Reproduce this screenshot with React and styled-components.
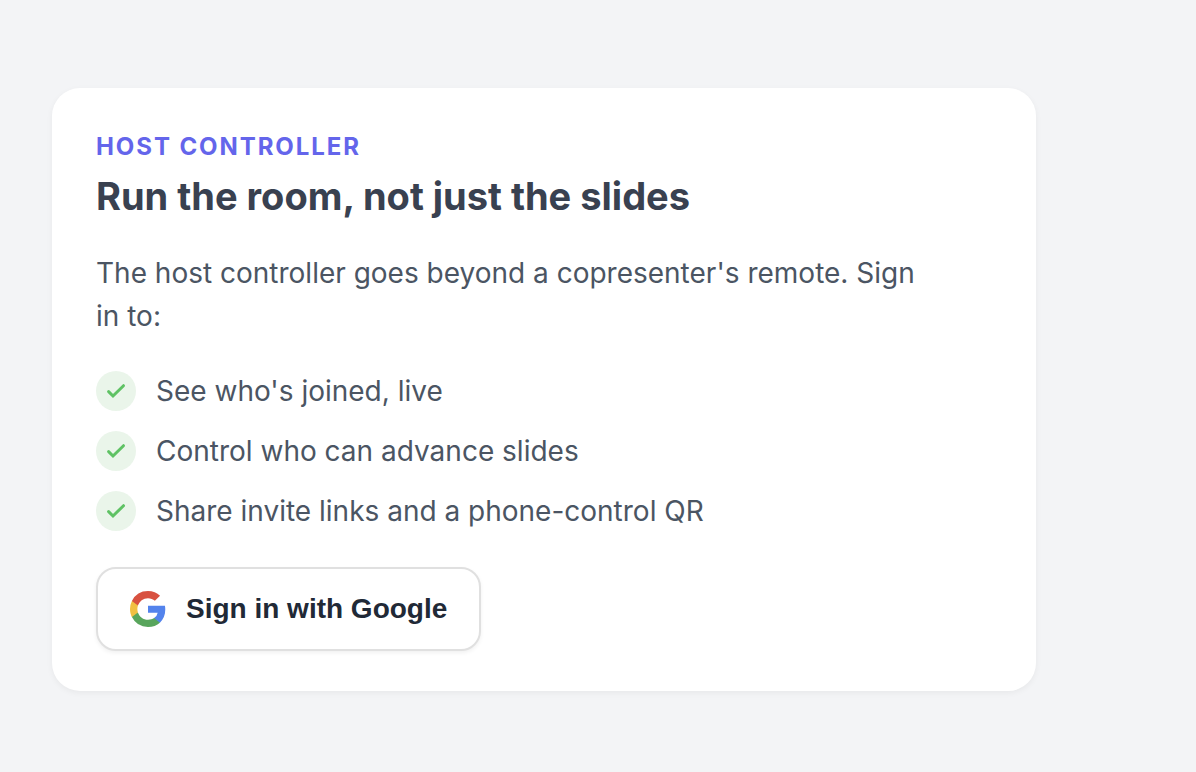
import React from "react";
import styled, { createGlobalStyle } from "styled-components";

const GlobalStyle = createGlobalStyle`
  *, *::before, *::after { box-sizing: border-box; }
  body {
    margin: 0;
    background: #f3f4f6;
    color: #4b5563;
    font-family: Inter, "Liberation Sans", sans-serif;
  }
`;

const Page = styled.main`
  padding: 88px 160px 80px 52px;
`;

const Card = styled.section`
  padding: 44px;
  padding-bottom: 40px;
  border-radius: 28px;
  background: #fff;
  box-shadow: 0 2px 6px rgba(0, 0, 0, 0.05);
`;

const Eyebrow = styled.p`
  margin: 0;
  color: #6465eb;
  font-size: 24px;
  font-weight: 700;
  line-height: 30px;
  letter-spacing: 0.08em;
  text-transform: uppercase;
`;

const Title = styled.h1`
  margin: 8px 0 0;
  color: #394150;
  font-size: 38px;
  font-weight: 700;
  line-height: 52px;
`;

const Lead = styled.p`
  max-width: 840px;
  margin: 30px 0 0;
  font-size: 28px;
  line-height: 43px;
`;

const Benefits = styled.ul`
  display: grid;
  gap: 20px;
  margin: 33px 0 0;
  padding: 0;
  list-style: none;
`;

const Benefit = styled.li`
  display: flex;
  align-items: center;
  gap: 20px;
  font-size: 28px;
  line-height: 40px;
`;

const CheckBadge = styled.span`
  display: grid;
  place-items: center;
  flex: none;
  width: 40px;
  height: 40px;
  border-radius: 50%;
  background: #eaf5ea;
`;

const GoogleButton = styled.button`
  display: inline-flex;
  align-items: center;
  gap: 20px;
  height: 84px;
  margin-top: 36px;
  padding: 0 32px;
  border: 2px solid #e0e0e0;
  border-radius: 20px;
  background: #fff;
  box-shadow: 0 2px 4px rgba(0, 0, 0, 0.06);
  color: #212936;
  font-family: "Liberation Sans", Arial, sans-serif;
  font-size: 28px;
  font-weight: 700;
  line-height: 32px;
  cursor: pointer;
`;

const benefits = [
  "See who's joined, live",
  "Control who can advance slides",
  "Share invite links and a phone-control QR",
];

function CheckIcon() {
  return (
    <svg width="24" height="24" viewBox="0 0 24 24" fill="none" aria-hidden="true">
      <path d="M4.6 12.6 9 17 19.5 6.7" stroke="#5fc264" strokeWidth="3" strokeLinecap="round" />
    </svg>
  );
}

function GoogleIcon() {
  return (
    <svg width="36" height="36" viewBox="0 0 18 18" aria-hidden="true">
      <path fill="#5383ec" d="M17.64 9.2c0-.637-.057-1.251-.164-1.84H9v3.481h4.844a4.14 4.14 0 0 1-1.796 2.716v2.259h2.908c1.702-1.567 2.684-3.875 2.684-6.615z" />
      <path fill="#58a55c" d="M9 18c2.43 0 4.467-.806 5.956-2.18l-2.908-2.259c-.806.54-1.837.86-3.048.86-2.344 0-4.328-1.584-5.036-3.711H.957v2.332A9 9 0 0 0 9 18z" />
      <path fill="#f1bf42" d="M3.964 10.71A5.41 5.41 0 0 1 3.682 9c0-.593.102-1.17.282-1.71V4.958H.957A9 9 0 0 0 0 9c0 1.452.348 2.827.957 4.042l3.007-2.332z" />
      <path fill="#d85140" d="M9 3.58c1.321 0 2.508.454 3.44 1.345l2.582-2.58C13.463.891 11.426 0 9 0A9 9 0 0 0 .957 4.958L3.964 7.29C4.672 5.163 6.656 3.58 9 3.58z" />
    </svg>
  );
}

export default function App() {
  return (
    <>
      <GlobalStyle />
      <Page>
        <Card>
          <Eyebrow>Host controller</Eyebrow>
          <Title>Run the room, not just the slides</Title>
          <Lead>
            The host controller goes beyond a copresenter's remote. Sign in to:
          </Lead>
          <Benefits>
            {benefits.map((text) => (
              <Benefit key={text}>
                <CheckBadge><CheckIcon /></CheckBadge>
                {text}
              </Benefit>
            ))}
          </Benefits>
          <GoogleButton type="button">
            <GoogleIcon />
            Sign in with Google
          </GoogleButton>
        </Card>
      </Page>
    </>
  );
}
